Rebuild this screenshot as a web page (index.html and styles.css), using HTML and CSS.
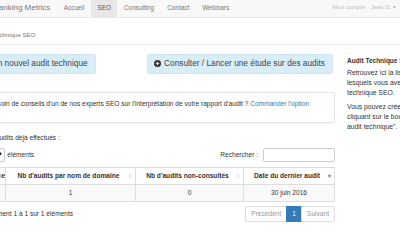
FILE: index.html
```html
<!DOCTYPE html>
<html lang="fr">
<head>
  <meta charset="UTF-8" />
  <meta name="viewport" content="width=device-width, initial-scale=1" />
  <title>Ranking Metrics - Audit technique SEO</title>
  <link rel="stylesheet" href="styles.css">
</head>
<body>
  <nav class="navbar">
    <a class="brand" href="#">Ranking Metrics</a>
    <ul class="nav">
      <li><a href="#">Accueil</a></li>
      <li class="active"><a href="#">SEO</a></li>
      <li><a href="#">Consulting</a></li>
      <li><a href="#">Contact</a></li>
      <li><a href="#">Webinars</a></li>
    </ul>
    <div class="user">Mon compte · Jean D. ▾</div>
  </nav>

  <div class="page">
    <div class="crumb">Réaliser un audit technique SEO</div>

    <div class="layout">
      <main class="main">
        <div class="actions">
          <a class="btn btn-new" href="#">
            <svg viewBox="0 0 16 16" width="7" height="7"><circle cx="8" cy="8" r="8" fill="#333"/><path d="M8 4v8M4 8h8" stroke="#d9edf7" stroke-width="2.6"/></svg>
            Créer un nouvel audit technique
          </a>
          <a class="btn" href="#">
            <svg viewBox="0 0 16 16" width="7" height="7"><circle cx="8" cy="8" r="8" fill="#333"/><path d="M8 4v8M4 8h8" stroke="#d9edf7" stroke-width="2.6"/></svg>
            Consulter / Lancer une étude sur des audits
          </a>
        </div>

        <div class="panel">
          <p>Vous avez besoin de conseils d'un de nos experts SEO sur l'interprétation de votre rapport d'audit ? <a href="#">Commander l'option</a></p>
        </div>

        <p class="list-title">Voici la liste des audits déjà effectués :</p>

        <div class="tools">
          <label>Afficher <select><option>10</option></select> éléments</label>
          <label>Rechercher : <input type="search" /></label>
        </div>

        <table class="audits">
          <thead>
            <tr>
              <th class="c0">Nom de domaine</th>
              <th class="c1">Nb d'audits par nom de domaine</th>
              <th class="c2">Nb d'audits non-consultés</th>
              <th class="c3 sorted">Date du dernier audit</th>
            </tr>
          </thead>
          <tbody>
            <tr>
              <td>exemple.fr</td>
              <td>1</td>
              <td>0</td>
              <td>30 juin 2016</td>
            </tr>
          </tbody>
        </table>

        <div class="table-foot">
          <div class="info">Affichage de l'élément 1 à 1 sur 1 éléments</div>
          <ul class="pagination">
            <li class="disabled"><a href="#">Précédent</a></li>
            <li class="current"><a href="#">1</a></li>
            <li class="disabled"><a href="#">Suivant</a></li>
          </ul>
        </div>
      </main>

      <aside class="side">
        <h4>Audit Technique SEO</h4>
        <p>Retrouvez ici la liste des domaines pour<br>lesquels vous avez commandé un audit<br>technique SEO.</p>
        <p>Vous pouvez créer un nouvel audit en<br>cliquant sur le bouton "Créer un nouvel<br>audit technique".</p>
      </aside>
    </div>
  </div>
</body>
</html>
```

FILE: styles.css
```css
body {
  margin: 0;
  font-family: 'Liberation Sans', Arial, sans-serif;
  font-size: 6.6px;
  line-height: 9.5px;
  color: #333;
  background: #fff;
  overflow: hidden;
}

a {
  color: #337ab7;
  text-decoration: none;
}

/* navbar */
.navbar {
  display: flex;
  align-items: stretch;
  height: 17px;
  background: #f8f8f8;
  border-bottom: 1px solid #e7e7e7;
  white-space: nowrap;
}

.brand {
  margin-left: -7px;
  padding-top: 2.5px;
  font-size: 8px;
  color: #777;
}

.nav {
  display: flex;
  list-style: none;
  margin: 0 0 0 7px;
  padding: 0;
}

.nav a {
  display: block;
  height: 17px;
  padding: 3px 6.5px 0;
  box-sizing: border-box;
  color: #777;
  font-size: 6.4px;
}

.nav .active a {
  background: #e7e7e7;
  color: #555;
}

.user {
  margin-left: auto;
  margin-right: 4px;
  padding-top: 3px;
  color: #bbb;
  font-size: 6px;
  filter: blur(0.6px);
}

/* page */
.page {
  margin-left: -53px;
}

.crumb {
  padding: 12px 0 4px;
  border-bottom: 1px solid #eee;
  color: #777;
  font-size: 6.1px;
}

.layout {
  display: flex;
}

.main {
  width: 388px;
  flex-shrink: 0;
}

.actions {
  display: flex;
  justify-content: space-between;
  margin-top: 9px;
  padding-right: 2px;
}

.btn {
  display: flex;
  align-items: center;
  gap: 3px;
  height: 20px;
  padding: 0 7px 0 6px;
  box-sizing: border-box;
  background: #d9edf7;
  border: 1px solid #cfe6f2;
  border-radius: 2px;
  color: #3b4650;
  font-size: 8.3px;
}

.btn-new {
  padding-left: 12px;
}

.panel {
  margin-top: 18px;
  padding: 6px 7px 14px 10px;
  border: 1px solid #e3e3e3;
  border-radius: 2px;
  box-shadow: 0 1px 1px rgba(0, 0, 0, 0.05);
}

.panel p {
  margin: 0;
}

.list-title {
  margin: 10px 0 0;
}

.tools {
  display: flex;
  justify-content: space-between;
  align-items: center;
  margin-top: 5px;
}

.tools select {
  width: 34px;
  height: 14px;
  padding: 0;
  font-size: 6px;
  border: 1px solid #ccc;
  border-radius: 2px;
  background: #fff;
}

.tools input {
  width: 72px;
  height: 14px;
  box-sizing: border-box;
  margin-left: 3px;
  border: 1px solid #ccc;
  border-radius: 2px;
}

.tools label {
  display: flex;
  align-items: center;
  gap: 2px;
}

/* table */
.audits {
  width: 100%;
  margin-top: 5px;
  border-collapse: collapse;
  table-layout: fixed;
}

.audits th,
.audits td {
  box-sizing: border-box;
  border: 1px solid #ddd;
  text-align: center;
}

.audits th {
  position: relative;
  height: 17px;
  padding: 0 8px 0 4px;
  font-weight: bold;
  white-space: nowrap;
  overflow: hidden;
}

.audits th::after {
  content: '\21D5';
  position: absolute;
  right: 3px;
  top: 4px;
  color: #ddd;
  font-size: 5px;
}

.audits th.sorted::after {
  content: '\25BE';
  color: #888;
  font-size: 6px;
}

.audits td {
  height: 17px;
  padding: 0 4px;
  background: #f9f9f9;
  white-space: nowrap;
  overflow: hidden;
}

.c0 { width: 58px; }
.c1 { width: 130px; }
.c2 { width: 108px; }

.table-foot {
  display: flex;
  justify-content: space-between;
  align-items: center;
  margin-top: 4px;
}

.pagination {
  display: flex;
  list-style: none;
  margin: 0;
  padding: 0;
}

.pagination a {
  display: block;
  height: 16px;
  line-height: 14px;
  padding: 0 5px;
  box-sizing: border-box;
  border: 1px solid #ddd;
  margin-left: -1px;
  color: #337ab7;
}

.pagination li:first-child a {
  border-radius: 2px 0 0 2px;
}

.pagination li:last-child a {
  border-radius: 0 2px 2px 0;
}

.pagination .disabled a {
  color: #999;
}

.pagination .current a {
  background: #337ab7;
  border-color: #337ab7;
  color: #fff;
}

/* sidebar */
.side {
  margin-left: 12px;
  padding-top: 11px;
  white-space: nowrap;
  font-size: 6.8px;
}

.side h4 {
  margin: 0 0 3px;
  font-size: 6.5px;
}

.side p {
  margin: 0 0 5px;
  line-height: 9.8px;
}
```
